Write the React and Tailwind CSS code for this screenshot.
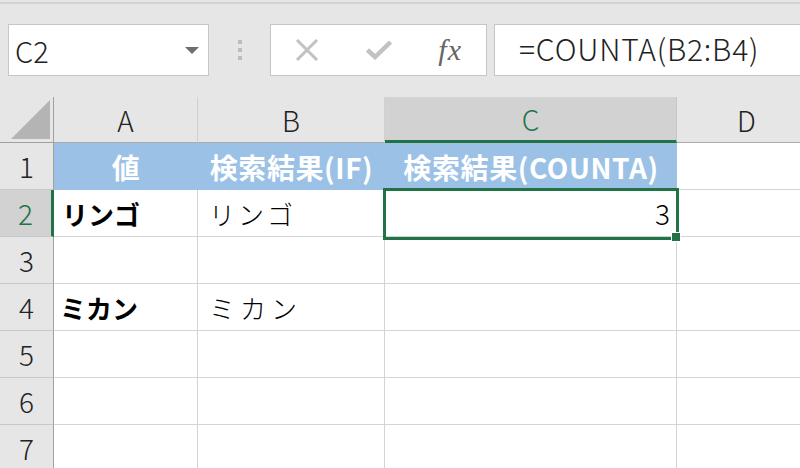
import React from "react";

const cols = [
  { key: "A", w: "w-[144px]" },
  { key: "B", w: "w-[187px]" },
  { key: "C", w: "w-[292px]" },
  { key: "D", w: "w-[140px]" },
];

function ColHeader({ label, active }) {
  return (
    <div
      className={
        active
          ? "flex items-center justify-center text-[28px] font-light bg-[#d2d2d2] text-[#217346] border-r border-[#c8c8c8] border-b-[3px] border-b-[#217346]"
          : "flex items-center justify-center text-[28px] font-light text-[#222] border-r border-[#d0d0d0] border-b border-b-[#ababab]"
      }
    >
      {label}
    </div>
  );
}

function RowHeader({ n, active }) {
  return (
    <div
      className={
        active
          ? "flex items-center justify-center text-[28px] font-light bg-[#d2d2d2] text-[#217346] border-b border-[#c8c8c8] border-r-[3px] border-r-[#217346]"
          : "flex items-center justify-center text-[28px] font-light text-[#222] border-b border-[#c8c8c8] border-r border-r-[#a0a0a0]"
      }
    >
      {n}
    </div>
  );
}

function Cell({ children, className = "" }) {
  return <div className={"flex items-center bg-white border-r border-b border-[#d4d4d4] " + className}>{children}</div>;
}

function HeadCell({ children }) {
  return (
    <div className="flex items-center justify-center bg-[#9bc2e6] text-white font-bold text-[28px] tracking-[0.6px] whitespace-nowrap">
      {children}
    </div>
  );
}

export default function App() {
  const rows = [
    [
      <HeadCell key="a">値</HeadCell>,
      <HeadCell key="b">検索結果(IF)</HeadCell>,
      <HeadCell key="c">検索結果(COUNTA)</HeadCell>,
      <Cell key="d" />,
    ],
    [
      <Cell key="a" className="pl-[8px] font-bold">リンゴ</Cell>,
      <Cell key="b" className="pl-[11px] tracking-[3px] font-light">リンゴ</Cell>,
      <Cell key="c" className="justify-end pr-[6px] text-[28px] font-light">3</Cell>,
      <Cell key="d" />,
    ],
    [<Cell key="a" />, <Cell key="b" />, <Cell key="c" />, <Cell key="d" />],
    [
      <Cell key="a" className="pl-[6px] font-bold">ミカン</Cell>,
      <Cell key="b" className="pl-[11px] tracking-[5px] font-light">ミカン</Cell>,
      <Cell key="c" />,
      <Cell key="d" />,
    ],
    [<Cell key="a" />, <Cell key="b" />, <Cell key="c" />, <Cell key="d" />],
    [<Cell key="a" />, <Cell key="b" />, <Cell key="c" />, <Cell key="d" />],
    [<Cell key="a" />, <Cell key="b" />, <Cell key="c" />, <Cell key="d" />],
  ];

  return (
    <div className="w-[800px] h-[468px] overflow-hidden bg-[#e6e6e6] font-['Noto_Sans_CJK_JP',sans-serif] text-[26px] text-black">
      {/* formula bar */}
      <div className="h-[97px] pt-[2px]">
        <div className="h-[2px] bg-[#d2d2d2]" />
        <div className="mt-[20px] flex items-start">
          <div className="shrink-0 ml-[8px] w-[201px] h-[52px] bg-white border border-[#c6c6c6] flex items-center justify-between pl-[6px] pr-[9px]">
            <span className="text-[#222] text-[29px] font-light leading-none">C2</span>
            <svg width="14" height="7" viewBox="0 0 14 7">
              <path d="M0 0 H14 L7 7 Z" fill="#6f6f6f" />
            </svg>
          </div>
          <div className="shrink-0 w-[61px] h-[52px] flex flex-col items-center justify-center gap-[4px]">
            <div className="w-[4px] h-[4px] bg-[#bdbdbd]" />
            <div className="w-[4px] h-[4px] bg-[#bdbdbd]" />
            <div className="w-[4px] h-[4px] bg-[#bdbdbd]" />
          </div>
          <div className="shrink-0 w-[217px] h-[52px] bg-white border border-[#c6c6c6] flex">
            <div className="w-[72px] flex items-center justify-center">
              <svg width="24" height="22" viewBox="0 0 24 22">
                <path d="M2 1 L22 21 M22 1 L2 21" stroke="#c2c2c2" strokeWidth="3" />
              </svg>
            </div>
            <div className="w-[72px] flex items-center justify-center">
              <svg width="26" height="20" viewBox="0 0 26 20">
                <path d="M1.5 10 L9 17 L24.5 2" stroke="#c2c2c2" strokeWidth="4.5" fill="none" />
              </svg>
            </div>
            <div className="w-[72px] flex items-center justify-center">
              <span className="font-['Liberation_Serif',serif] italic text-[30px] text-[#666] leading-none tracking-[1px]">fx</span>
            </div>
          </div>
          <div className="shrink-0 ml-[7px] w-[330px] h-[52px] bg-white border border-[#c6c6c6] flex items-center pl-[24px] pb-[5px]">
            <span className="text-[#222] text-[30px] leading-none font-light tracking-[0.8px]">=COUNTA(B2:B4)</span>
          </div>
        </div>
      </div>

      {/* sheet */}
      <div className="relative grid grid-cols-[54px_144px_187px_292px_140px] grid-rows-[46px_repeat(7,47px)] w-[817px]">
        <div className="flex items-end justify-end border-r border-r-[#a0a0a0] border-b border-b-[#a0a0a0] pr-[3px] pb-[3px]">
          <svg width="39" height="39" viewBox="0 0 39 39">
            <path d="M39 0 V39 H0 Z" fill="#b4b4b4" />
          </svg>
        </div>
        {cols.map((c) => (
          <ColHeader key={c.key} label={c.key} active={c.key === "C"} />
        ))}
        {rows.map((cells, i) => (
          <React.Fragment key={i}>
            <RowHeader n={i + 1} active={i === 1} />
            {cells}
          </React.Fragment>
        ))}

        <div className="absolute left-[383px] top-[91px] w-[296px] h-[52px] border-[3px] border-[#217346]" />
        <div className="absolute left-[671px] top-[135px] w-[10px] h-[10px] bg-[#217346] border border-white" />
      </div>
    </div>
  );
}
